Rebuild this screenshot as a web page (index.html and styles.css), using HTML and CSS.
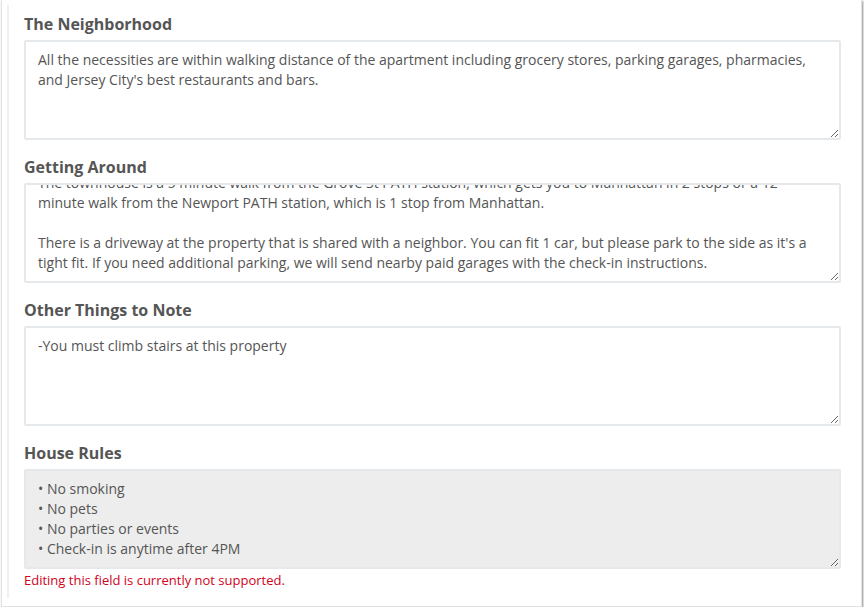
FILE: index.html
```html
<!DOCTYPE html>
<html>
<head>
<meta charset="utf-8">
<link rel="stylesheet" href="styles.css">
</head>
<body>
<div class="panel">
  <div class="inner">
    <h3 class="label">The Neighborhood</h3>
    <textarea class="field" readonly>All the necessities are within walking distance of the apartment including grocery stores, parking garages, pharmacies, and Jersey City's best restaurants and bars.</textarea>

    <h3 class="label">Getting Around</h3>
    <textarea class="field" id="ga" readonly>The townhouse is a 5 minute walk from the Grove St PATH station, which gets you to Manhattan in 2 stops or a 12 minute walk from the Newport PATH station, which is 1 stop from Manhattan.

There is a driveway at the property that is shared with a neighbor. You can fit 1 car, but please park to the side as it's a tight fit. If you need additional parking, we will send nearby paid garages with the check-in instructions.</textarea>

    <h3 class="label">Other Things to Note</h3>
    <textarea class="field" readonly>-You must climb stairs at this property</textarea>

    <h3 class="label">House Rules</h3>
    <textarea class="field disabled" readonly>• No smoking
• No pets
• No parties or events
• Check-in is anytime after 4PM</textarea>
    <p class="error">Editing this field is currently not supported.</p>
  </div>
</div>
<script src="script.js"></script>
</body>
</html>
```

FILE: styles.css
```css
html, body {
  margin: 0;
  padding: 0;
  background: #ffffff;
}
body {
  font-family: "Open Sans", "Liberation Sans", sans-serif;
  color: #555555;
}
.panel {
  box-sizing: border-box;
  width: 861px;
  height: 607px;
  margin-left: 1px;
  border: 1px solid #e2e2e2;
  border-top: none;
  box-shadow: 1px 1px 2px rgba(0, 0, 0, 0.45);
  background: #ffffff;
  padding: 5px 0 8px 5px;
}
.inner {
  box-sizing: border-box;
  height: 100%;
  border-left: 2px solid #eef0f1;
  padding: 8px 19px 0 15px;
}
.label {
  margin: 0 0 5px 0;
  font-size: 16px;
  line-height: 22px;
  font-weight: 700;
  color: #555555;
}
.field {
  display: block;
  box-sizing: border-box;
  width: 817px;
  height: 100px;
  margin: 0 0 16px 0;
  padding: 8px 12px;
  border: 2px solid #e6e9eb;
  border-radius: 2px;
  font-family: "Open Sans", "Liberation Sans", sans-serif;
  font-size: 14px;
  line-height: 20px;
  color: #555555;
  background: #ffffff;
  overflow: hidden;
  resize: vertical;
  outline: none;
}
.field.disabled {
  background: #ededed;
  margin-bottom: 0;
}
.error {
  margin: 2px 0 0 0;
  font-size: 13px;
  line-height: 18px;
  color: #d0021b;
}
```

FILE: script.js
```js
document.getElementById('ga').scrollTop = 20;
```
